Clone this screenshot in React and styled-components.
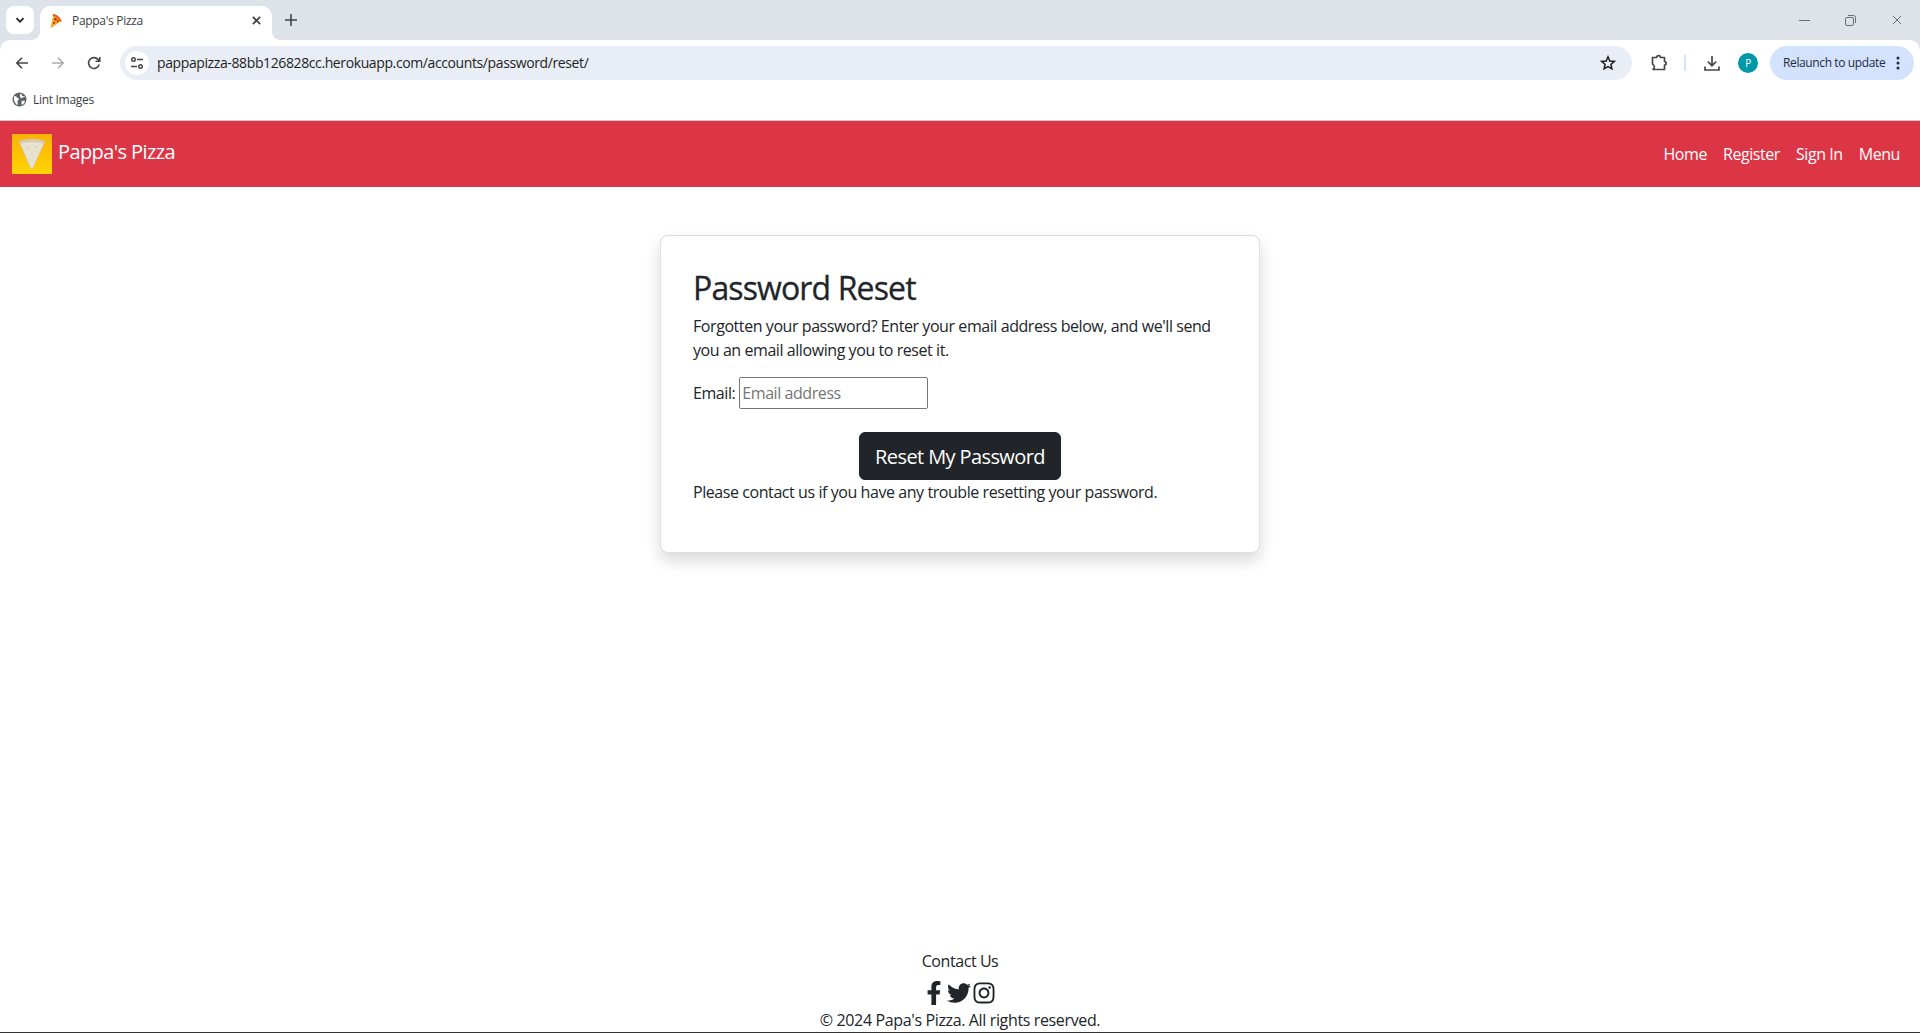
import React from 'react';
import styled, { createGlobalStyle } from 'styled-components';
import { FaFacebookF, FaTwitter, FaInstagram } from 'react-icons/fa';

const GlobalStyle = createGlobalStyle`
  html, body { margin: 0; padding: 0; background: #fff; }
  * { box-sizing: border-box; }
  body {
    font-family: "Open Sans", "Noto Sans", "Liberation Sans", sans-serif;
    color: #212529;
    font-size: 16px;
    line-height: 24px;
    letter-spacing: -0.43px;
  }
`;

const Page = styled.div`
  display: flex;
  flex-direction: column;
  height: 1033px;
  overflow: hidden;
`;

/* browser chrome */
const BrowserTop = styled.div`
  background: #dee3ea;
  flex-shrink: 0;
`;

const TabStrip = styled.div`
  display: flex;
  align-items: flex-end;
  height: 40px;
  padding-left: 6px;
`;

const TabSearch = styled.div`
  display: flex;
  align-items: center;
  justify-content: center;
  width: 28px;
  height: 28px;
  margin-bottom: 6px;
  border-radius: 8px;
  background: #fff;
  color: #1f1f1f;
`;

const Tab = styled.div`
  position: relative;
  display: flex;
  align-items: center;
  width: 232px;
  height: 34px;
  margin-left: 6px;
  padding: 0 10px 5px 8px;
  background: #fff;
  border-radius: 10px 10px 0 0;
  font-size: 12px;
  letter-spacing: -0.3px;
  color: #3c4043;

  &::before, &::after {
    content: '';
    position: absolute;
    bottom: 0;
    width: 8px;
    height: 8px;
  }
  &::before {
    left: -8px;
    background: radial-gradient(circle at 0 0, transparent 7.5px, #fff 8px);
  }
  &::after {
    right: -8px;
    background: radial-gradient(circle at 100% 0, transparent 7.5px, #fff 8px);
  }
`;

const TabTitle = styled.span`
  flex: 1;
  margin-left: 8px;
`;

const NewTab = styled.div`
  display: flex;
  align-items: center;
  justify-content: center;
  width: 28px;
  height: 34px;
  margin-left: 5px;
  padding-bottom: 6px;
  color: #444;
`;

const WindowControls = styled.div`
  display: flex;
  align-items: center;
  gap: 35px;
  margin-left: auto;
  height: 40px;
  padding-right: 17px;
  color: #6b6f74;
`;

const Toolbar = styled.div`
  display: flex;
  align-items: center;
  height: 46px;
  background: #fff;
  border-radius: 10px 10px 0 0;
  padding-left: 13px;
  padding-right: 6px;
`;

const NavIcon = styled.div`
  display: flex;
  align-items: center;
  justify-content: center;
  width: 18px;
  height: 18px;
  margin-right: ${p => p.$gap || 0}px;
  color: ${p => p.$muted ? '#a9acb0' : '#444746'};
`;

const Omnibox = styled.div`
  display: flex;
  align-items: center;
  flex: 1;
  height: 34px;
  margin-left: 17px;
  padding: 0 16px 0 5px;
  border-radius: 17px;
  background: #e9edf6;
  font-size: 14px;
  letter-spacing: -0.39px;
  color: #1f1f1f;
`;

const SiteChip = styled.div`
  display: flex;
  align-items: center;
  justify-content: center;
  width: 24px;
  height: 24px;
  border-radius: 50%;
  background: #fff;
  color: #444746;
  margin-right: 8px;
`;

const Url = styled.span`
  flex: 1;
`;

const ToolbarRight = styled.div`
  display: flex;
  align-items: center;
  margin-left: 18px;
`;

const Divider = styled.div`
  width: 2px;
  height: 16px;
  margin: 0 17px 0 16px;
  background: #d3e3fd;
`;

const Avatar = styled.div`
  display: flex;
  align-items: center;
  justify-content: center;
  width: 20px;
  height: 20px;
  margin: 0 12px 0 17px;
  border-radius: 50%;
  background: #0097a7;
  color: #fff;
  font-size: 10px;
`;

const Relaunch = styled.div`
  display: flex;
  align-items: center;
  justify-content: space-between;
  width: 144px;
  height: 34px;
  padding: 0 14px 0 13px;
  border-radius: 17px;
  background: #d3e3fd;
  color: #1f2a44;
  font-size: 12px;
  letter-spacing: -0.38px;
`;

const Bookmarks = styled.div`
  display: flex;
  align-items: center;
  flex-shrink: 0;
  gap: 6px;
  height: 35px;
  padding: 0 0 7px 12px;
  background: #fff;
  border-bottom: 1px solid #c9cbcd;
  font-size: 12px;
  letter-spacing: -0.3px;
  color: #3c4043;
`;

/* site */
const Navbar = styled.nav`
  display: flex;
  align-items: center;
  justify-content: space-between;
  height: 66px;
  padding: 0 20px 0 12px;
  background: #dc3545;
  flex-shrink: 0;
`;

const Brand = styled.a`
  display: flex;
  align-items: center;
  gap: 6px;
  font-size: 20px;
  letter-spacing: -0.6px;
  color: #fff;
`;

const BrandName = styled.span`
  margin-top: -4px;
`;

const NavLinks = styled.div`
  display: flex;
  gap: 16px;
  color: #fff;
`;

const NavLink = styled.a`
  color: #fff;
`;

const Main = styled.main`
  flex: 1;
  display: flex;
  justify-content: center;
  align-items: flex-start;
  padding-top: 48px;
`;

const Card = styled.section`
  width: 600px;
  height: 318px;
  padding: 32px;
  border: 1px solid rgba(0, 0, 0, 0.125);
  border-radius: 8px;
  background: #fff;
  box-shadow: 0 8px 16px rgba(0, 0, 0, 0.15);
`;

const Title = styled.h2`
  margin: 1px 0 7px;
  font-size: 32px;
  font-weight: 500;
  line-height: 38px;
  letter-spacing: -0.87px;
  -webkit-text-stroke: 0.3px #212529;
`;

const Text = styled.p`
  margin: 0;
`;

const EmailRow = styled.div`
  display: flex;
  align-items: center;
  gap: 4px;
  height: 35px;
  margin-top: 13px;
  margin-bottom: 22px;
`;

const EmailInput = styled.input`
  width: 189px;
  height: 32px;
  padding: 1px 2px;
  border: 1px solid #767676;
  border-radius: 2px;
  font: inherit;
  letter-spacing: inherit;
  &::placeholder { color: #757575; }
`;

const ButtonRow = styled.div`
  display: flex;
  justify-content: center;
`;

const SubmitButton = styled.button`
  width: 202px;
  height: 48px;
  padding-top: 2px;
  border: 1px solid #212529;
  border-radius: 6px;
  background: #212529;
  color: #fff;
  font: inherit;
  font-size: 20px;
  letter-spacing: -0.6px;
`;

const Footer = styled.footer`
  display: flex;
  flex-direction: column;
  justify-content: flex-end;
  align-items: center;
  flex-shrink: 0;
  height: 91px;
  padding-bottom: 1px;
  border-bottom: 1px solid #333;
`;

const Socials = styled.div`
  display: flex;
  align-items: center;
  gap: 1px;
  height: 30px;
  margin: 5px 0 1px;
  padding-right: 2px;
  color: #212529;
  font-size: 24px;
`;

const Copyright = styled.div`
  line-height: 22px;
  letter-spacing: -0.36px;
`;

const ChevronDown = () => (
  <svg width="12" height="12" viewBox="0 0 12 12" fill="none" stroke="currentColor" strokeWidth="1.8"><path d="M2.5 4.2 6 7.8l3.5-3.6" /></svg>
);

const Favicon = () => (
  <svg width="16" height="16" viewBox="0 0 16 16">
    <path d="M2.500 15.500 5 3c3.500.5 6 2.500 7.200 5.700L2.500 15.500Z" fill="#f7a823" />
    <path d="M5 1c4.300.6 7.500 3.500 8.700 7.300l-1.500.8C11 5.800 8.500 3.500 4.700 2.900L5 1Z" fill="#e8590c" />
    <circle cx="7.500" cy="6.200" r="1.300" fill="#a8281e" />
    <circle cx="9.800" cy="8.200" r="1" fill="#a8281e" />
    <circle cx="6" cy="10" r="1" fill="#a8281e" />
  </svg>
);

const CloseIcon = ({ size = 12, width = 1.8 }) => (
  <svg width={size} height={size} viewBox="0 0 12 12" fill="none" stroke="currentColor" strokeWidth={width}><path d="M2 2l8 8M10 2l-8 8" /></svg>
);

const PlusIcon = () => (
  <svg width="14" height="14" viewBox="0 0 14 14" fill="none" stroke="currentColor" strokeWidth="1.6"><path d="M7 1v12M1 7h12" /></svg>
);

const MinimizeIcon = () => (
  <svg width="11" height="11" viewBox="0 0 11 11" fill="none" stroke="currentColor"><path d="M0 5.500h11" /></svg>
);

const RestoreIcon = () => (
  <svg width="11" height="11" viewBox="0 0 11 11" fill="none" stroke="currentColor"><rect x=".5" y="2.500" width="8" height="8" rx="1.500" /><path d="M3 .5h5.500a2 2 0 0 1 2 2V8" /></svg>
);

const BackIcon = () => (
  <svg width="14" height="14" viewBox="0 0 14 14" fill="none" stroke="currentColor" strokeWidth="1.6"><path d="M13 7H2M7 1.800 1.800 7 7 12.200" /></svg>
);

const ForwardIcon = () => (
  <svg width="14" height="14" viewBox="0 0 14 14" fill="none" stroke="currentColor" strokeWidth="1.6"><path d="M1 7h11M7 1.800 12.200 7 7 12.200" /></svg>
);

const ReloadIcon = () => (
  <svg width="14" height="14" viewBox="0 0 14 14" fill="none" stroke="currentColor" strokeWidth="1.6"><path d="M12.200 8.500A5.400 5.400 0 1 1 11 3.400L12.500 5" /><path d="M12.800 1v4.300H8.500" /></svg>
);

const TuneIcon = () => (
  <svg width="14" height="14" viewBox="0 0 14 14" fill="none" stroke="currentColor" strokeWidth="1.4"><circle cx="3.500" cy="3.500" r="1.800" /><path d="M7 3.500h6M1 10.500h6" /><circle cx="10.500" cy="10.500" r="1.800" /></svg>
);

const StarIcon = () => (
  <svg width="16" height="16" viewBox="0 0 16 16" fill="none" stroke="currentColor" strokeWidth="1.5"><path d="m8 1.800 1.800 4.200 4.500.4-3.400 3 1 4.400L8 11.500l-3.900 2.300 1-4.400-3.400-3 4.500-.4L8 1.800Z" /></svg>
);

const ExtensionIcon = () => (
  <svg width="18" height="18" viewBox="0 0 18 18" fill="none" stroke="currentColor" strokeWidth="1.700" strokeLinejoin="round"><path d="M2.500 3.500h4.200c0-2.400 3.800-2.400 3.800 0h4v4c2.200 0 2.200 3.600 0 3.600v4.400H3.200v-.6c1.800-.8 1.600-3.800-.7-4.600V3.500Z" /></svg>
);

const DownloadIcon = () => (
  <svg width="16" height="16" viewBox="0 0 16 16" fill="none" stroke="currentColor" strokeWidth="1.700"><path d="M8 1v9.500M3.800 6.500 8 10.700l4.200-4.200M1 11.500V15h14v-3.500" /></svg>
);

const DotsIcon = () => (
  <svg width="4" height="14" viewBox="0 0 4 14" fill="currentColor"><circle cx="2" cy="2" r="1.500" /><circle cx="2" cy="7" r="1.500" /><circle cx="2" cy="12" r="1.500" /></svg>
);

const GlobeIcon = () => (
  <svg width="15" height="15" viewBox="0 0 15 15"><circle cx="7.500" cy="7.500" r="7" fill="#5f6368" /><path d="M2 4.500c2-.5 2.500 0 3 1s2 .5 2 1.500-1.500 1-1.500 2.500.5 2 0 3.500C3 12 1.500 8 2 4.500ZM9 1.500c1 1 .5 2 1.500 2.500s2 0 2.500.5c-.5 1-2.500.5-3 1.500s-1.500-.5-2-1.500S8 2.500 9 1.500ZM10 9c1-.500 2.500-.5 3 0-.5 2-1.500 3-3 4-.5-1-1-3 0-4Z" fill="#fff" /></svg>
);

const PizzaLogo = () => (
  <svg width="40" height="40" viewBox="0 0 40 40">
    <defs>
      <linearGradient id="logoBg" x1="0" y1="0" x2="0" y2="1">
        <stop offset="0" stopColor="#f9b208" />
        <stop offset="1" stopColor="#ffd400" />
      </linearGradient>
    </defs>
    <rect width="40" height="40" fill="url(#logoBg)" />
    <path d="M7 7.500C14 4.500 26 4.500 33 7.500L21 34c-.8 1.300-1.700 1.300-2.500 0L7 7.500Z" fill="#e9e2cf" stroke="#c9bd9f" strokeWidth=".6" />
    <path d="M7 7.500C14 4.500 26 4.500 33 7.500L32 9.800C25 7.500 15 7.500 8 9.800L7 7.500Z" fill="#d5cbb0" />
    <circle cx="16" cy="14" r=".7" fill="#bfb496" />
    <circle cx="24" cy="13" r=".7" fill="#bfb496" />
    <circle cx="20" cy="20" r=".7" fill="#bfb496" />
    <circle cx="18" cy="26" r=".6" fill="#bfb496" />
    <circle cx="25" cy="18" r=".5" fill="#bfb496" />
  </svg>
);

export default function App() {
  return (
    <Page>
      <GlobalStyle />
      <BrowserTop>
        <TabStrip>
          <TabSearch><ChevronDown /></TabSearch>
          <Tab>
            <Favicon />
            <TabTitle>Pappa's Pizza</TabTitle>
            <CloseIcon size={11} />
          </Tab>
          <NewTab><PlusIcon /></NewTab>
          <WindowControls>
            <MinimizeIcon />
            <RestoreIcon />
            <CloseIcon size={12} width={1} />
          </WindowControls>
        </TabStrip>
        <Toolbar>
          <NavIcon $gap={18}><BackIcon /></NavIcon>
          <NavIcon $gap={18} $muted><ForwardIcon /></NavIcon>
          <NavIcon><ReloadIcon /></NavIcon>
          <Omnibox>
            <SiteChip><TuneIcon /></SiteChip>
            <Url>pappapizza-88bb126828cc.herokuapp.com/accounts/password/reset/</Url>
            <StarIcon />
          </Omnibox>
          <ToolbarRight>
            <NavIcon><ExtensionIcon /></NavIcon>
            <Divider />
            <NavIcon><DownloadIcon /></NavIcon>
            <Avatar>P</Avatar>
            <Relaunch>Relaunch to update <DotsIcon /></Relaunch>
          </ToolbarRight>
        </Toolbar>
      </BrowserTop>
      <Bookmarks><GlobeIcon /> Lint Images</Bookmarks>
      <Navbar>
        <Brand><PizzaLogo /> <BrandName>Pappa's Pizza</BrandName></Brand>
        <NavLinks>
          <NavLink>Home</NavLink>
          <NavLink>Register</NavLink>
          <NavLink>Sign In</NavLink>
          <NavLink>Menu</NavLink>
        </NavLinks>
      </Navbar>
      <Main>
        <Card>
          <Title>Password Reset</Title>
          <Text>Forgotten your password? Enter your email address below, and we'll send you an email allowing you to reset it.</Text>
          <EmailRow>
            <span>Email:</span>
            <EmailInput placeholder="Email address" />
          </EmailRow>
          <ButtonRow><SubmitButton>Reset My Password</SubmitButton></ButtonRow>
          <Text>Please contact us if you have any trouble resetting your password.</Text>
        </Card>
      </Main>
      <Footer>
        <span>Contact Us</span>
        <Socials><FaFacebookF /><FaTwitter /><FaInstagram /></Socials>
        <Copyright>© 2024 Papa's Pizza. All rights reserved.</Copyright>
      </Footer>
    </Page>
  );
}
